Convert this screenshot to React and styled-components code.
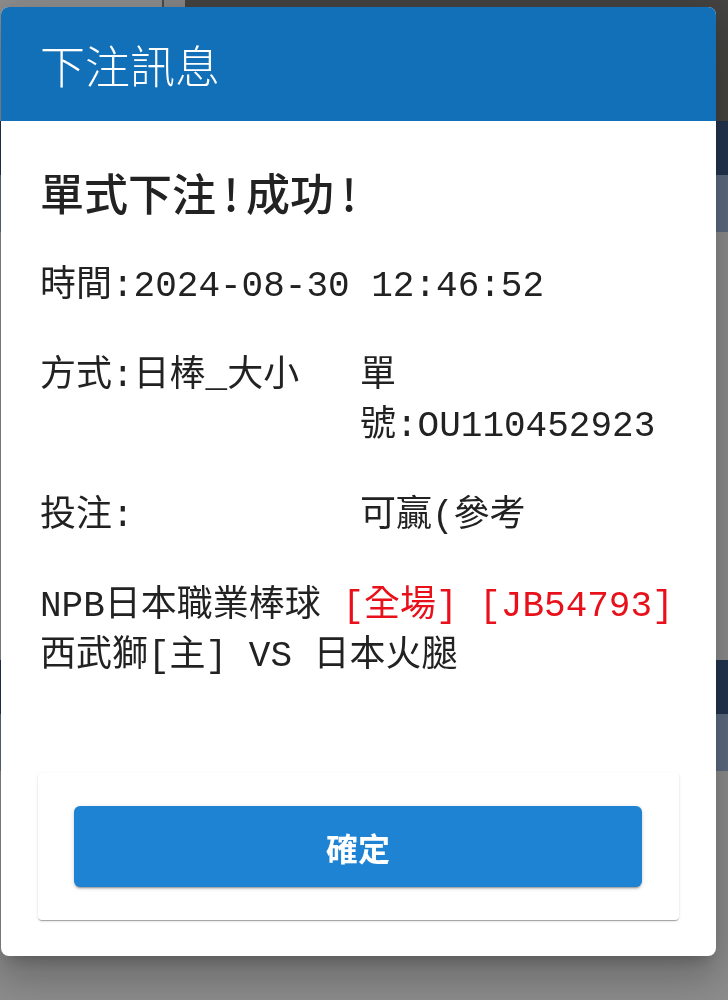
import styled, { createGlobalStyle } from 'styled-components'

const GlobalStyle = createGlobalStyle`
    html, body {
        margin: 0;
        padding: 0;
        background: #ffffff;
    }
    * {
        box-sizing: border-box;
    }
`

const mono = `"Liberation Mono", "Noto Sans CJK TC", monospace`
const sans = `"Noto Sans CJK TC", "Noto Sans", sans-serif`

/* page underneath the dialog */
export const Page = styled.div`
    height: 100vh;
    overflow: hidden;
    background: #ffffff;
`

export const TopBar = styled.div`
    display: flex;
    height: 121px;
    background: #f2f2f2;
`

export const TopTab = styled.div`
    width: 164px;
    background: #ffffff;
    border-right: 2px solid #8a8a8a;
`

export const TopFill = styled.div`
    flex: 1;
    margin-left: 21px;
    background: #7e7a75;
`

export const MatchBlock = styled.div`
`

export const MatchHead = styled.div`
    height: 54px;
    background: #405f90;
`

export const MatchSub = styled.div`
    height: 57px;
    background: #a8c3e9;
`

export const MatchBody = styled.div`
    height: 428px;
    background: #ffffff;
`

/* dialog */
export const Overlay = styled.div`
    position: fixed;
    inset: 0;
    background: rgba(0, 0, 0, .45);
    padding: 7px 12px 0 1px;
`

export const Dialog = styled.div`
    background: #fff;
    border-radius: 8px;
    overflow: hidden;
    box-shadow: 0 11px 15px -7px rgba(0,0,0,.2), 0 24px 38px 3px rgba(0,0,0,.14), 0 9px 46px 8px rgba(0,0,0,.12);
`

export const DialogHeader = styled.div`
    height: 114px;
    background: #1270b8;
    display: flex;
    align-items: center;
    padding-left: 39px;
`

export const HeaderTitle = styled.h2`
    margin: 0;
    color: #fff;
    font-family: ${sans};
    font-weight: 300;
    font-size: 45px;
    line-height: 1;
`

export const DialogBody = styled.div`
    padding: 41px 39px 0 39px;
    color: #222;
    font-family: ${mono};
    font-size: 36px;
`

export const Result = styled.h3`
    margin: 0 0 40px;
    font-family: ${sans};
    font-size: 44px;
    font-weight: 500;
    line-height: 60px;
    color: #222;
`

export const Bang = styled.span`
    display: inline-block;
    width: 30px;
    text-align: center;
`

export const InfoRow = styled.div`
    display: grid;
    grid-template-columns: ${props => props.split ? '320px 1fr' : '1fr'};
    line-height: 50px;
    margin-bottom: 40px;

    &:last-child {
        margin-bottom: 0;
    }
`

export const Cell = styled.div`
    min-width: 0;
`

export const Red = styled.span`
    color: #e8101a;
`

export const ActionCard = styled.div`
    margin: 91px 37px 36px;
    padding: 33px 37px 33px 36px;
    background: #fff;
    border-radius: 4px;
    box-shadow: 0 2px 1px -1px rgba(0,0,0,.2), 0 1px 1px 0 rgba(0,0,0,.14), 0 1px 3px 0 rgba(0,0,0,.12);
`

export const ConfirmButton = styled.button`
    display: block;
    width: 100%;
    height: 81px;
    border: none;
    border-radius: 6px;
    background: #1f83d4;
    color: #fff;
    font-family: ${sans};
    font-size: 32px;
    font-weight: 700;
    cursor: pointer;
    box-shadow: 0 3px 1px -2px rgba(0,0,0,.2), 0 2px 2px 0 rgba(0,0,0,.14), 0 1px 5px 0 rgba(0,0,0,.12);
`

export default function App() {
    return (
        <>
            <GlobalStyle />
            <Page>
                <TopBar>
                    <TopTab />
                    <TopFill />
                </TopBar>
                {[0, 1].map(i => (
                    <MatchBlock key={i}>
                        <MatchHead />
                        <MatchSub />
                        <MatchBody />
                    </MatchBlock>
                ))}
            </Page>
            <Overlay>
                <Dialog>
                    <DialogHeader>
                        <HeaderTitle>下注訊息</HeaderTitle>
                    </DialogHeader>
                    <DialogBody>
                        <Result>單式下注<Bang>!</Bang>成功<Bang>!</Bang></Result>
                        <InfoRow>
                            <Cell>時間:2024-08-30 12:46:52</Cell>
                        </InfoRow>
                        <InfoRow split>
                            <Cell>方式:日棒_大小</Cell>
                            <Cell>單號:OU110452923</Cell>
                        </InfoRow>
                        <InfoRow split>
                            <Cell>投注:</Cell>
                            <Cell>可贏(參考</Cell>
                        </InfoRow>
                        <InfoRow>
                            <Cell>
                                NPB日本職業棒球 <Red>[全場]</Red> <Red>[JB54793]</Red>
                                <br />
                                西武獅[主] VS 日本火腿
                            </Cell>
                        </InfoRow>
                    </DialogBody>
                    <ActionCard>
                        <ConfirmButton>確定</ConfirmButton>
                    </ActionCard>
                </Dialog>
            </Overlay>
        </>
    )
}
